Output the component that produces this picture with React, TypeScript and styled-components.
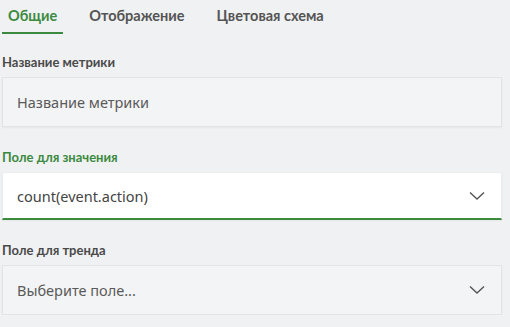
import React from "react";
import styled, { createGlobalStyle } from "styled-components";

const Global = createGlobalStyle`
  html, body { margin: 0; padding: 0; background: #f0f1f2; }
  body { font-family: Lato, "Noto Sans", sans-serif; }
`;

const Page = styled.div`
  width: 500px;
  padding: 0 0 0 2px;
  display: flex;
  flex-direction: column;
`;

const Tabs = styled.div`
  display: flex;
  gap: 20px;
  height: 34px;
`;

const Tab = styled.div<{ $active?: boolean }>`
  padding: 0 6px;
  font-size: 14.5px;
  font-weight: 700;
  line-height: 32px;
  color: ${(p) => (p.$active ? "#3b8a3f" : "#545454")};
  border-bottom: 2px solid ${(p) => (p.$active ? "#3b8a3f" : "transparent")};
`;

const Form = styled.div`
  display: flex;
  flex-direction: column;
  gap: 22px;
  margin-top: 20px;
`;

const Field = styled.div`
  display: flex;
  flex-direction: column;
  gap: 7px;
`;

const Label = styled.div<{ $focused?: boolean }>`
  font-size: 13px;
  font-weight: 700;
  line-height: 16px;
  color: ${(p) => (p.$focused ? "#3b8a3f" : "#4a4a4a")};
`;

const Box = styled.div<{ $focused?: boolean }>`
  box-sizing: border-box;
  height: ${(p) => (p.$focused ? "48px" : "50px")};
  display: flex;
  align-items: center;
  justify-content: space-between;
  padding: 0 16px 0 14px;
  background: ${(p) => (p.$focused ? "#ffffff" : "#f3f4f5")};
  border: 1px solid ${(p) => (p.$focused ? "#ebecee" : "#e2e4e6")};
  border-bottom: ${(p) => (p.$focused ? "2px solid #3b8a3f" : "1px solid #e2e4e6")};
  box-shadow: 0 1px 2px rgba(0, 0, 0, 0.05);
  font-family: "Noto Sans", sans-serif;
  font-size: 14.5px;
  color: ${(p) => (p.$focused ? "#444" : "#5a5a5a")};
`;

const Chevron = () => (
  <svg width="16" height="10" viewBox="0 0 16 10" fill="none">
    <path d="M1 1.5 L8 8 L15 1.5" stroke="#555" strokeWidth="1.4" />
  </svg>
);

export default function App() {
  return (
    <Page>
      <Global />
      <Tabs>
        <Tab $active>Общие</Tab>
        <Tab>Отображение</Tab>
        <Tab>Цветовая схема</Tab>
      </Tabs>
      <Form>
        <Field>
          <Label>Название метрики</Label>
          <Box>Название метрики</Box>
        </Field>
        <Field>
          <Label $focused>Поле для значения</Label>
          <Box $focused>
            count(event.action)
            <Chevron />
          </Box>
        </Field>
        <Field>
          <Label>Поле для тренда</Label>
          <Box>
            Выберите поле...
            <Chevron />
          </Box>
        </Field>
      </Form>
    </Page>
  );
}
